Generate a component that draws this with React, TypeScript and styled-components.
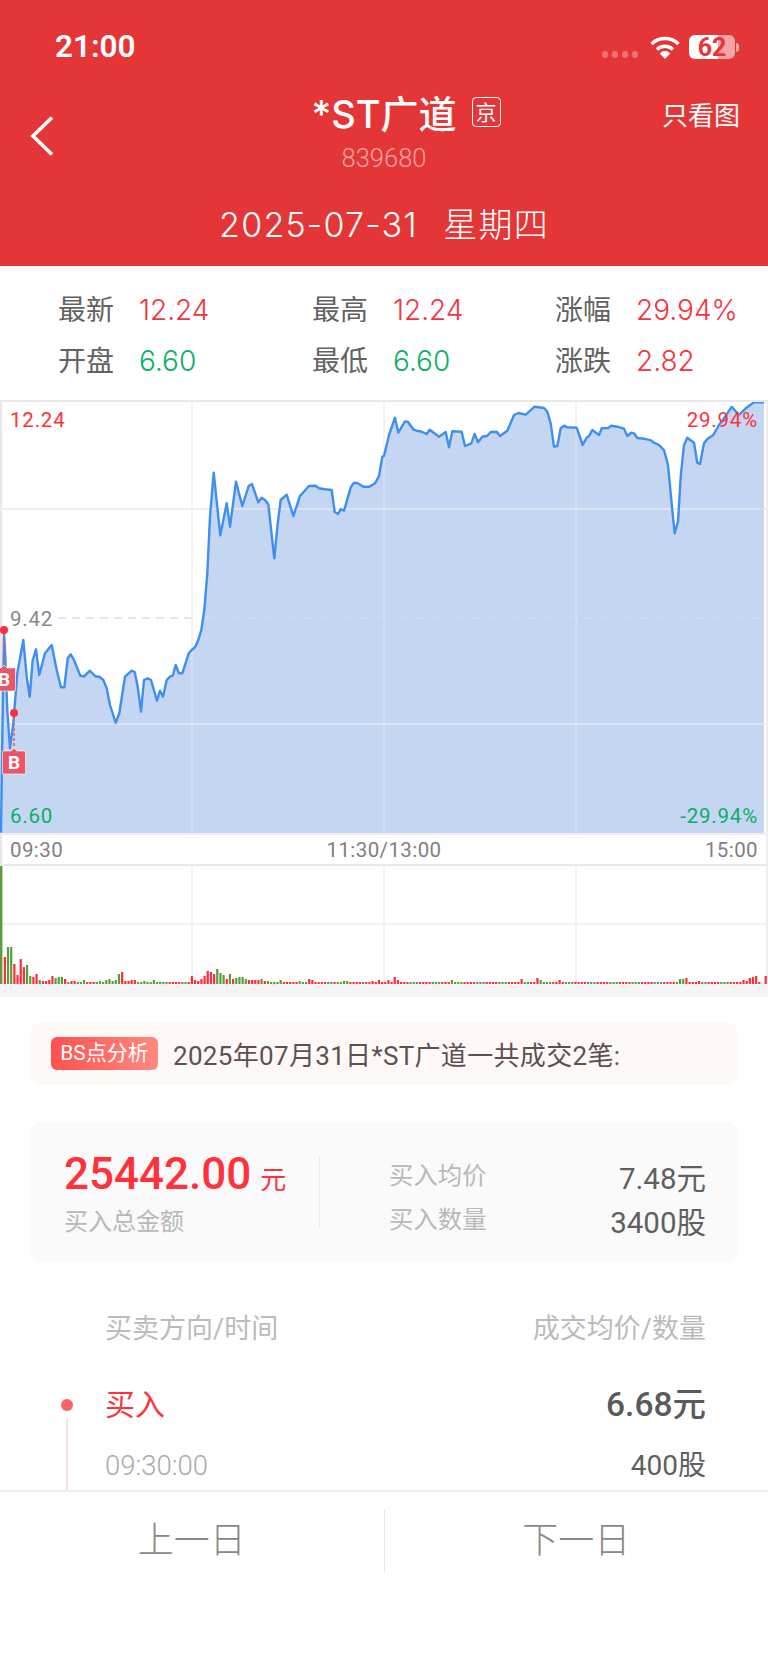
import React from "react";
import styled, { createGlobalStyle } from "styled-components";

const Global = createGlobalStyle`
  html, body { margin: 0; padding: 0; background: #fff; }
  body { font-family: Roboto, "Noto Sans CJK SC", sans-serif; }
  * { box-sizing: border-box; }
`;

const App_ = styled.div`
  width: 768px; height: 1663px; display: flex; flex-direction: column; overflow: hidden; background: #fff;
`;
const Header = styled.header`
  height: 266px; background: #e53637; color: #fff; flex: none;
`;
const StatusBar = styled.div`
  height: 95px; padding: 30px 29px 0 55px; display: flex; justify-content: space-between; align-items: flex-start;
`;
const Clock = styled.div`font: 600 31.5px/34px Roboto, sans-serif;`;
const StatusIcons = styled.div`display: flex; align-items: center; height: 34px;`;
const Dots = styled.div`display: flex; gap: 3.5px; margin: 15px 11px 0 0;`;
const Dot = styled.i`width: 6.5px; height: 6.5px; border-radius: 3px; background: rgba(255,255,255,.3);`;
const Battery = styled.div`
  width: 46px; height: 24px; margin-left: 8px; border-radius: 6px; text-align: center;
  background: linear-gradient(90deg, #fff 62%, rgba(255,255,255,.55) 62%);
  color: #e53637; font: 700 25px/25px Roboto, sans-serif;
`;
const Nub = styled.i`width: 3px; height: 9px; margin-left: 1px; border-radius: 0 3px 3px 0; background: rgba(255,255,255,.55);`;
const Nav = styled.div`display: grid; grid-template-columns: 1fr auto 1fr; height: 78px;`;
const Back = styled.svg`margin: 21px 0 0 30px; display: block;`;
const TitleBox = styled.div`display: flex; flex-direction: column; align-items: center;`;
const Title = styled.div`position: relative; top: 1px; font: 500 38px/36px Inter, "Noto Sans CJK SC", sans-serif; white-space: nowrap;`;
const Market = styled.span`
  position: absolute; left: 100%; margin-left: 15px; top: 1px; width: 29px; height: 30px; border: 1.5px solid #fff; border-radius: 4px;
  font: 400 21px/26px "Noto Sans CJK SC", sans-serif; text-align: center;
`;
const Code = styled.div`margin-top: 12px; font: 300 25.5px/30px Roboto, sans-serif; color: rgba(255,255,255,.55);`;
const OnlyChart = styled.div`justify-self: end; margin-right: 28px; font: 400 26px/38px "Noto Sans CJK SC", sans-serif;`;
const DateRow = styled.div`
  margin-top: 30px; text-align: center; font: 300 34px/44px Inter, "Noto Sans CJK SC", sans-serif;
  letter-spacing: 1.2px; word-spacing: 2px; white-space: pre;
`;

const Stats = styled.section`
  height: 134px; flex: none; padding: 18px 0 0 58px; display: grid;
  grid-template-columns: 254px 243px 1fr; grid-auto-rows: 51px;
`;
const Stat = styled.div`display: flex; align-items: center; gap: 25px; font-size: 28px; color: #626262;`;
const StatLabel = styled.span`margin-top: -4px;`;
const StatValue = styled.span<{ $c: string }>`color: ${p => p.$c}; font-family: Inter, sans-serif; font-weight: 300;`;

const ChartBox = styled.section`
  position: relative; height: 433px; flex: none; border-top: 2px solid #e8e8e8; border-left: 2px solid #e8e8e8; border-right: 2px solid #eee;
`;
const ChartSvg = styled.svg`display: block; position: absolute; left: -2px; top: 0;`;
const ChartLabel = styled.span<{ $c: string; $y: number; $right?: boolean }>`
  position: absolute; top: ${p => p.$y}px; ${p => (p.$right ? "right: 8px;" : "left: 8px;")}
  color: ${p => p.$c}; font: 400 20.5px/24px Roboto, sans-serif; letter-spacing: .8px;
`;
const TimeAxis = styled.div`
  height: 33px; flex: none; padding: 0 8px; display: flex; justify-content: space-between; align-items: center;
  border-left: 2px solid #e8e8e8; border-right: 2px solid #eee; border-top: 2px solid #eee; border-bottom: 2px solid #e8e8e8;
  color: #808080; font: 400 20.5px/24px Roboto, sans-serif; letter-spacing: .4px;
`;
const VolumeSvg = styled.svg`display: block; flex: none;`;
const Strip = styled.div`height: 13px; flex: none; background: #f5f5f5;`;

const Scroll = styled.main`flex: 1; min-height: 0; overflow: hidden;`;
const Notice = styled.div`
  margin: 25px 31px 0; height: 63px; padding-left: 20px; display: flex; align-items: center; gap: 15px;
  background: #fef8f6; border-radius: 10px; color: #5e5050; font-size: 26px; letter-spacing: .32px; white-space: nowrap;
`;
const NoticeTag = styled.span`
  width: 107px; height: 33px; border-radius: 6px; text-align: center; color: #fff; font-size: 21px; line-height: 32px; letter-spacing: 0;
  background: linear-gradient(90deg, #ff5150, #ff8a7e);
`;
const Summary = styled.div`
  margin: 37px 31px 0; height: 140px; padding: 30px 31px 0 33px; display: grid; grid-template-columns: 256px 1fr;
  background: #fafafa; border-radius: 10px;
`;
const Total = styled.div`height: 72px; margin-top: 4px; border-right: 1px solid #eaeaea;`;
const Amount = styled.div`
  margin-top: -4px;
  color: #ff323c; font: 500 44px/44px Roboto, sans-serif; white-space: nowrap;
  small { font: 400 26px "Noto Sans CJK SC", sans-serif; margin-left: 9px; }
`;
const SoftLabel = styled.div<{ $wide?: boolean }>`color: #b8b8b8; font-size: ${p => (p.$wide ? 24 : 24.4)}px; line-height: 32px;`;
const TotalLabel = styled(SoftLabel)`margin-top: 10px;`;
const Facts = styled.div`padding-left: 69px; display: grid; grid-auto-rows: 44px; margin-top: 2px;`;
const Fact = styled.div`display: flex; justify-content: space-between; align-items: center; color: #5f5f5f; font-size: 29.5px;`;

const ListHead = styled.div`
  margin-top: 52px; padding: 0 62px 0 105px; display: flex; justify-content: space-between;
  color: #bbb; font-size: 27px; line-height: 30px;
`;
const Trade = styled.div`margin-top: 41px; padding-right: 62px; display: flex; align-items: flex-start;`;
const Rail = styled.div`width: 20px; margin: 0 28px 0 57px; display: flex; flex-direction: column; align-items: center; padding-top: 14px;`;
const RailDot = styled.i`width: 12px; height: 12px; border-radius: 50%; background: #f8636a; flex: none;`;
const RailLine = styled.i`width: 2px; height: 90px; margin-top: 8px; background: #fcdcdc; flex: none;`;
const TradeBody = styled.div`flex: 1; display: grid; align-content: start; row-gap: 23px;`;
const TradeRow = styled.div`display: flex; justify-content: space-between; align-items: center;`;
const Side = styled.span`color: #ff323c; font-size: 30px; line-height: 40px;`;
const Price = styled.span`color: #5a5a5a; font: 500 33.5px/40px Roboto, "Noto Sans CJK SC", sans-serif;`;
const TimeText = styled.span`color: #aaa; font-size: 27.5px; font-weight: 300; line-height: 36px;`;
const Qty = styled.span`color: #5f5f5f; font-size: 28px; line-height: 36px;`;

const Footer = styled.footer`height: 173px; flex: none; border-top: 2px solid #eee; padding-top: 18px; display: flex; align-items: flex-start; background: #fff;`;
const DayButton = styled.div<{ $split?: boolean }>`
  flex: 1; height: 62px; line-height: 62px; text-align: center; color: #888; font-size: 36px; font-weight: 300;
  ${p => (p.$split ? "border-left: 1px solid #e6e6e6;" : "")}
`;

const leftPts = [[3,1328],[6,1100],[12,725],[16,800],[22,960],[30,1075],[40,1000],[52,850],[70,750],[80,860],[89,920],[98,810],[108,778],[118,855],[135,790],[155,765],[170,840],[183,892],[193,892],[203,805],[212,793],[222,810],[241,857],[252,859],[270,842],[286,859],[298,860],[310,870],[320,895],[330,945],[347,998],[358,970],[375,860],[395,842],[404,846],[413,890],[423,965],[432,870],[443,865],[453,870],[471,932],[480,902],[489,920],[500,870],[510,860],[518,857],[527,825],[537,850],[547,850],[566,790],[575,780],[585,772],[595,750],[604,720],[613,660],[622,550],[630,380],[641,248],[661,436],[680,340],[690,410],[708,275],[727,348],[746,288],[756,282],[775,337],[785,323],[795,330],[805,343],[823,505],[833,400],[842,330],[860,314],[880,378],[900,318],[927,288],[947,287],[957,295],[975,298],[995,300],[1004,366],[1014,372],[1022,358],[1032,362],[1052,292],[1062,278],[1072,279],[1090,290],[1108,290],[1125,280],[1137,258],[1147,200]];
const rightPts = [[0,198],[15,135],[33,83],[43,128],[63,94],[72,96],[88,118],[100,123],[110,124],[128,132],[137,119],[165,140],[185,126],[195,172],[205,124],[233,125],[243,168],[262,160],[272,132],[282,157],[295,140],[310,137],[320,126],[338,125],[348,138],[370,122],[390,75],[403,69],[425,74],[452,50],[480,54],[490,65],[500,100],[510,170],[520,168],[530,115],[540,107],[550,112],[578,113],[596,165],[608,143],[615,138],[625,120],[645,135],[653,115],[672,114],[682,107],[700,110],[720,116],[730,138],[742,128],[750,130],[760,144],[780,146],[800,151],[810,158],[825,165],[840,180],[852,225],[865,360],[872,430],[882,395],[890,260],[900,165],[910,143],[930,158],[940,218],[948,222],[960,160],[970,147],[988,135],[1005,105],[1020,85],[1043,50],[1065,75],[1085,55],[1110,37],[1140,37]];
// page coordinates relative to the plot's top edge (y = 402)
const plot = [
  ...leftPts.map(([x, y]) => [x / 3, 390 + y / 3 - 402]),
  ...rightPts.map(([x, y]) => [384 + x / 3, 390 + y / 3 - 402]),
];
const line = plot.map(p => p[0].toFixed(1) + "," + p[1].toFixed(1)).join(" ");
const area = line + " 764,431 1,431";

const volLeft = [-119,27,-37,-37,20,9,25,17,-19,-8,7,10,-4,3,3,4,8,-6,-7,-7,5,-2,3,3,-2,-2,-4,2,2,2,-2,-3,-2,-4,-5,-3,-4,-10,12,3,3,4,4,-2,-2,-3,-2,-2,-4,-2,-2,-2,-2,2,2,2,2,-2,-2,2,8,4,3,5,8,13,12,10,-15,-11,-9,5,-10,5,-6,-7,-7,-5,4,4,4,4,-5,3,-3,-2,-2,-2,-4,2,2,2,2,2,-3,-2,-2,5,4,2,2,2,2,-2,-2,2,-2,-2,-3,-3,2,2,2,2,-2,2,2,3,2,4,2,2];
const volOver: Record<number, number> = { 0: 4, 1: 2, 2: 7, 3: 4, 20: -4, 42: 5, 47: 6, 48: -4, 54: 4, 92: -5, 93: -5, 94: 6, 96: 2, 98: 3, 112: 4, 113: 3, 114: 6, 115: 7, 116: 8, 117: 2, 118: 0, 119: 8 };
const volRight = Array.from({ length: 120 }, (_, i) => volOver[i] ?? (i % 7 < 3 ? -2 : 2));
const vols = [...volLeft, ...volRight];

const Wifi = () => (
  <svg width="32" height="24" viewBox="0 0 32 24" fill="none" stroke="#fff" strokeWidth="3.4">
    <path d="M2.5 9A19.5 19.5 0 0 1 29.5 9" />
    <path d="M8 14.5A11.5 11.5 0 0 1 24 14.5" />
    <path d="M16 24L10.8 18.4A7 7 0 0 1 21.2 18.4Z" fill="#fff" stroke="none" />
  </svg>
);

const Marker = ({ x, y, dotY }: { x: number; y: number; dotY: number }) => (
  <g>
    <line x1={x} x2={x} y1={dotY} y2={y} stroke="#ea5568" strokeWidth="1.5" strokeDasharray="3 2" />
    <path d={`M${x - 11.5} ${y + 3}L${x - 3} ${y + 3}L${x} ${y}L${x + 3} ${y + 3}L${x + 11.5} ${y + 3}V${y + 26}H${x - 11.5}Z`} fill="#ea5568" stroke="#fff" strokeWidth=".6" />
    <text x={x} y={y + 21} textAnchor="middle" fill="#fff" fontFamily="Roboto, sans-serif" fontWeight="700" fontSize="19">B</text>
    <circle cx={x} cy={dotY} r="4" fill="#ff2d3c" />
  </g>
);

const Chart = () => (
  <ChartSvg width="768" height="431" viewBox="0 0 768 431">
    <defs>
      <clipPath id="under-line"><polygon points={area} /></clipPath>
    </defs>
    <line x1="58" x2="192" y1="216" y2="216" stroke="#cfe0f5" strokeWidth="1.5" strokeDasharray="8 6" />
    <line x1="0" x2="768" y1="107" y2="107" stroke="#eee" strokeWidth="2" />
    <line x1="0" x2="768" y1="322" y2="322" stroke="#eee" strokeWidth="2" />
    {[192, 384, 576].map(x => <line key={x} x1={x} x2={x} y1="0" y2="431" stroke="#eee" strokeWidth="1.5" />)}
    <polygon points={area} fill="#c5d6f3" />
    <g clipPath="url(#under-line)">
      <line x1="1" x2="764" y1="107" y2="107" stroke="#e0e7f5" strokeWidth="1.5" />
      <line x1="1" x2="764" y1="322" y2="322" stroke="#e0e7f5" strokeWidth="1.5" />
      <line x1="192" x2="764" y1="216" y2="216" stroke="#d3dff1" strokeWidth="1" strokeDasharray="8 6" />
      {[192, 384, 576].map(x => <line key={x} x1={x} x2={x} y1="0" y2="431" stroke="#e0e7f5" strokeWidth="1" />)}
    </g>
    <polyline points={line} fill="none" stroke="#3e8ff0" strokeWidth="2.4" strokeLinejoin="round" />
    <Marker x={4} y={263} dotY={228} />
    <Marker x={14} y={346} dotY={311} />
  </ChartSvg>
);

const Volume = () => (
  <VolumeSvg width="768" height="118" viewBox="0 0 768 118">
    <line x1="1" x2="1" y1="0" y2="118" stroke="#e8e8e8" strokeWidth="2" />
    <line x1="767" x2="767" y1="0" y2="118" stroke="#eee" strokeWidth="2" />
    <line x1="0" x2="768" y1="58" y2="58" stroke="#eee" strokeWidth="1.5" />
    {[192, 384, 576].map(x => <line key={x} x1={x} x2={x} y1="0" y2="118" stroke="#eee" strokeWidth="1.5" />)}
    {vols.map((v, i) => (
      <rect key={i} x={i === 0 ? 0 : i * 3.17 + 0.6} width={i === 0 ? 2.4 : 2.2} y={118 - Math.abs(v)} height={Math.abs(v)} fill={v < 0 ? "#5a9e3a" : "#ff2d3c"} />
    ))}
  </VolumeSvg>
);

export default function App() {
  const red = "#f5333f";
  const green = "#0aaf63";
  return (
    <App_>
      <Global />
      <Header>
        <StatusBar>
          <Clock>21:00</Clock>
          <StatusIcons>
            <Dots><Dot /><Dot /><Dot /><Dot /></Dots>
            <Wifi />
            <Battery>62</Battery>
            <Nub />
          </StatusIcons>
        </StatusBar>
        <Nav>
          <Back width="24" height="40" viewBox="0 0 24 40" fill="none" stroke="#fff" strokeWidth="3.6">
            <path d="M22 1.5L3 20L22 38.5" />
          </Back>
          <TitleBox>
            <Title>*ST广道<Market>京</Market></Title>
            <Code>839680</Code>
          </TitleBox>
          <OnlyChart>只看图</OnlyChart>
        </Nav>
        <DateRow>2025-07-31  星期四</DateRow>
      </Header>
      <Stats>
        <Stat><StatLabel>最新</StatLabel><StatValue $c={red}>12.24</StatValue></Stat>
        <Stat><StatLabel>最高</StatLabel><StatValue $c={red}>12.24</StatValue></Stat>
        <Stat><StatLabel>涨幅</StatLabel><StatValue $c={red}>29.94%</StatValue></Stat>
        <Stat><StatLabel>开盘</StatLabel><StatValue $c={green}>6.60</StatValue></Stat>
        <Stat><StatLabel>最低</StatLabel><StatValue $c={green}>6.60</StatValue></Stat>
        <Stat><StatLabel>涨跌</StatLabel><StatValue $c={red}>2.82</StatValue></Stat>
      </Stats>
      <ChartBox>
        <Chart />
        <ChartLabel $c="#ff323c" $y={6}>12.24</ChartLabel>
        <ChartLabel $c="#ff323c" $y={6} $right>29.94%</ChartLabel>
        <ChartLabel $c="#888" $y={205}>9.42</ChartLabel>
        <ChartLabel $c="#0aaf63" $y={402}>6.60</ChartLabel>
        <ChartLabel $c="#0aaf63" $y={402} $right>-29.94%</ChartLabel>
      </ChartBox>
      <TimeAxis>
        <span>09:30</span>
        <span>11:30/13:00</span>
        <span>15:00</span>
      </TimeAxis>
      <Volume />
      <Strip />
      <Scroll>
        <Notice>
          <NoticeTag>BS点分析</NoticeTag>
          2025年07月31日*ST广道一共成交2笔:
        </Notice>
        <Summary>
          <Total>
            <Amount>25442.00<small>元</small></Amount>
            <TotalLabel $wide>买入总金额</TotalLabel>
          </Total>
          <Facts>
            <Fact><SoftLabel>买入均价</SoftLabel>7.48元</Fact>
            <Fact><SoftLabel>买入数量</SoftLabel>3400股</Fact>
          </Facts>
        </Summary>
        <ListHead>
          <span>买卖方向/时间</span>
          <span>成交均价/数量</span>
        </ListHead>
        <Trade>
          <Rail><RailDot /><RailLine /></Rail>
          <TradeBody>
            <TradeRow><Side>买入</Side><Price>6.68元</Price></TradeRow>
            <TradeRow><TimeText>09:30:00</TimeText><Qty>400股</Qty></TradeRow>
          </TradeBody>
        </Trade>
      </Scroll>
      <Footer>
        <DayButton>上一日</DayButton>
        <DayButton $split>下一日</DayButton>
      </Footer>
    </App_>
  );
}
